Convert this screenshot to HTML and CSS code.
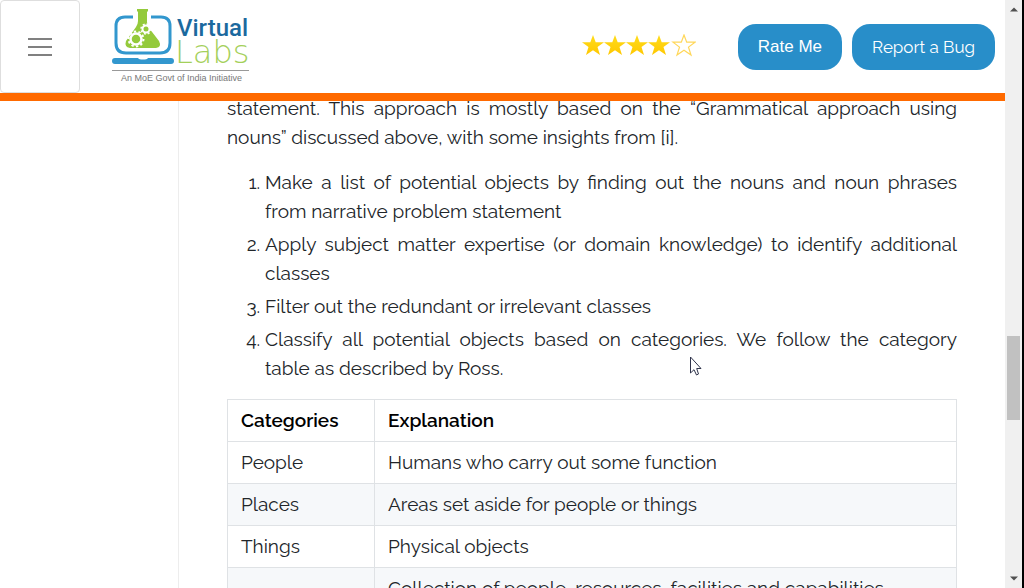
FILE: index.html
```html
<!DOCTYPE html>
<html lang="en">
<head>
<meta charset="utf-8">
<meta name="viewport" content="width=device-width, initial-scale=1">
<title>Virtual Labs</title>
<link rel="stylesheet" href="styles.css">
</head>
<body>
<div class="page">
  <header class="header">
    <button class="menu" type="button" aria-label="Menu">
      <svg width="24" height="20" viewBox="0 0 24 20" aria-hidden="true"><path d="M0 2H24M0 10H24M0 18H24" stroke="#808080" stroke-width="2"/></svg>
    </button>
    <a class="logo" href="#" aria-label="Virtual Labs">
      <svg width="140" height="78" viewBox="0 0 140 78">
        <path d="M21 9H13Q4 9 4 18V35Q4 45 14 45H48Q58 45 58 35V18Q58 9 49 9H39" fill="none" stroke="#3297ce" stroke-width="3"/>
        <path d="M3 50H26Q27 51.500 31 51.500Q35 51.500 36 50H59Q62 50 62 53Q62 56 59 56H3Q0 56 0 53Q0 50 3 50Z" fill="#3297ce"/>
        <path d="M25 1H36V3L35 4V14Q35 17 37 20L47 33Q50 39 44 40H18Q12 39 14 33L24 19Q26 16 26 13V4L25 3Z" fill="#94ca3b"/>
        <circle cx="24" cy="31" r="5.500" fill="none" stroke="#fff" stroke-width="2.500"/>
        <circle cx="24" cy="31" r="7.500" fill="none" stroke="#fff" stroke-width="2" stroke-dasharray="2.350 2.350"/>
        <circle cx="34" cy="21" r="3.500" fill="none" stroke="#fff" stroke-width="2"/>
        <circle cx="34" cy="21" r="5" fill="none" stroke="#fff" stroke-width="1.500" stroke-dasharray="1.960 1.960"/>
        <text class="logo-virtual" x="65" y="28">Virtual</text>
        <text class="logo-labs" x="63" y="55">Labs</text>
        <path d="M0 62.500H137" stroke="#999" stroke-width="1"/>
        <text class="logo-note" x="9" y="73">An MoE Govt of India Initiative</text>
      </svg>
    </a>
    <div class="actions">
      <svg class="stars" width="114" height="26" viewBox="0 0 114 26" role="img" aria-label="4 out of 5 stars">
        <defs>
          <linearGradient id="gold" x1="0" y1="0" x2="0" y2="1"><stop offset="0" stop-color="#ffdc1c"/><stop offset="1" stop-color="#ffc800"/></linearGradient>
          <path id="star" d="M11 1L13.700 8.200H22L15.500 13.100L18 21L11 16.300L4 21L6.500 13.100L0 8.200H8.300Z"/>
        </defs>
        <g fill="url(#gold)"><use href="#star"/><use href="#star" x="22"/><use href="#star" x="44"/><use href="#star" x="66"/></g>
        <use href="#star" x="91" fill="#fff" stroke="#ffd75a" stroke-width="1.200"/>
      </svg>
      <button class="btn btn-rate" type="button">Rate Me</button>
      <button class="btn" type="button">Report a Bug</button>
    </div>
  </header>
  <div class="body">
    <aside class="sidebar"></aside>
    <main class="content">
      <p class="intro">statement. This approach is mostly based on the “Grammatical approach using nouns” discussed above, with some insights from [i].</p>
      <ol class="steps">
        <li>Make a list of potential objects by finding out the nouns and noun phrases from&nbsp;narrative problem statement</li>
        <li>Apply subject matter expertise (or domain knowledge) to identify additional classes</li>
        <li>Filter out the redundant or irrelevant classes</li>
        <li>Classify all potential objects based on categories. We follow the category table&nbsp;as described by Ross.</li>
      </ol>
      <table class="table">
        <thead><tr><th class="col-category" scope="col">Categories</th><th scope="col">Explanation</th></tr></thead>
        <tbody>
          <tr><td>People</td><td>Humans who carry out some function</td></tr>
          <tr><td>Places</td><td>Areas set aside for people or things</td></tr>
          <tr><td>Things</td><td>Physical objects</td></tr>
          <tr><td></td><td>Collection of people, resources, facilities and capabilities</td></tr>
        </tbody>
      </table>
    </main>
  </div>
  <svg class="cursor" width="13" height="20" viewBox="0 0 13 20" aria-hidden="true"><path d="M1.500 1V17L5 13.700L7.500 19L9.500 18L7.700 12.500H12Z" fill="#fff" stroke="#30344c" stroke-width="1"/></svg>
</div>
<div class="scrollbar" aria-hidden="true">
  <svg width="8" height="5" viewBox="0 0 8 5"><path d="M0 4.500L4 0.500L8 4.500Z" fill="#505050"/></svg>
  <div class="track"><div class="thumb"></div></div>
  <svg width="8" height="5" viewBox="0 0 8 5"><path d="M0 0.500L4 4.500L8 0.500Z" fill="#505050"/></svg>
</div>
</body>
</html>
```
FILE: styles.css
```css
* { box-sizing: border-box; }
body {
  margin: 0;
  display: flex;
  height: 100vh;
  overflow: hidden;
  background: #fff;
  color: #212529;
  font-family: Raleway, Lato, sans-serif;
  font-size: 19px;
  line-height: 29px;
}
.page { position: relative; flex: 1; min-width: 0; overflow: hidden; }
.header {
  position: absolute;
  top: 0;
  left: 0;
  right: 0;
  z-index: 2;
  display: flex;
  align-items: center;
  padding-right: 10px;
  background: #fff;
  border-bottom: 8px solid #ff6a00;
}
.menu {
  display: flex;
  align-items: center;
  justify-content: center;
  width: 80px;
  height: 93px;
  padding: 0;
  background: #fff;
  border: 1px solid #dedede;
  border-radius: 4px;
}
.logo { display: flex; margin-left: 32px; }
.logo-virtual { font: 500 24px Roboto, sans-serif; fill: #1b699e; }
.logo-labs { font: 200 32px "DejaVu Sans Light", "DejaVu Sans", sans-serif; fill: #a4d05a; }
.logo-note { font: 9px "Liberation Sans", sans-serif; fill: #777; }
.actions { display: flex; align-items: center; gap: 10px; margin-left: auto; }
.stars { margin-right: 32px; }
.btn {
  height: 46px;
  padding: 0 20px;
  border: 0;
  border-radius: 18px;
  background: #288ec9;
  color: #fff;
  font-family: Raleway, Lato, sans-serif;
  font-size: 17px;
}
.btn-rate { font-family: "Liberation Sans", sans-serif; }
.body { display: flex; height: 100%; }
.sidebar { flex: 0 0 179px; border-right: 1px solid #ededed; }
.content { flex: 1; min-width: 0; padding: 94px 48px 0; }
.intro { margin: 0 0 16px; text-align: justify; }
.steps { margin: 0 0 16px; padding-left: 38px; text-align: justify; }
.steps li { margin-bottom: 4px; }
.table { width: 100%; border-collapse: collapse; }
.table th, .table td {
  height: 42px;
  padding: 6px 13px;
  border: 1px solid #dfe2e5;
  text-align: left;
}
.table th { color: #000; font-weight: 600; }
.table .col-category { width: 147px; }
.table tbody tr:nth-child(even) { background: #f6f8fa; }
.cursor { position: absolute; left: 689px; top: 356px; }
.scrollbar {
  flex: 0 0 19px;
  display: flex;
  flex-direction: column;
  align-items: center;
  padding: 7px 0;
  background: #f0f0f0;
  border-right: 2px solid #000;
}
.track { flex: 1; width: 13px; display: flex; flex-direction: column; }
.track::before { content: ""; flex: 324; }
.track::after { content: ""; flex: 156; }
.thumb { flex: 84; background: #c1c1c1; }
```
